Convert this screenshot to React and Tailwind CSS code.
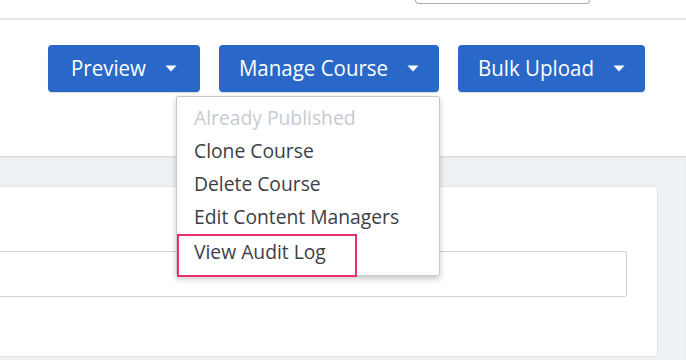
import React from "react";

function Caret() {
  return (
    <svg width="12" height="7" viewBox="0 0 12 7" className="shrink-0">
      <path d="M0.5 0.5 L11.5 0.5 L6 6.5 Z" fill="#ffffff" />
    </svg>
  );
}

function DropButton({ label, width }) {
  return (
    <button
      className="h-[47px] rounded-[4px] bg-[#2968c8] text-white text-[20.5px] flex items-center justify-center gap-[19px] shadow-[0_1px_1px_rgba(0,0,0,0.15)]"
      style={{ width }}
    >
      <span className="inline-block leading-none scale-y-[1.06]">{label}</span>
      <Caret />
    </button>
  );
}

export default function App() {
  return (
    <div
      className="relative w-[686px] h-[360px] overflow-hidden bg-white"
      style={{ fontFamily: '"Open Sans", "Noto Sans", sans-serif' }}
    >
      {/* top strip */}
      <div className="h-[18px] pl-[415px]">
        <div className="w-[175px] h-[4px] border-x border-b border-[#a9aeb6] rounded-b-[4px]" />
      </div>
      <div className="h-[2px] bg-[#e5e5e5]" />

      {/* header with buttons */}
      <div className="h-[136px] pt-[25px] pr-[41px] flex justify-end items-start gap-[19px]">
        <DropButton label="Preview" width={152} />
        <DropButton label="Manage Course" width={220} />
        <DropButton label="Bulk Upload" width={187} />
      </div>

      {/* gray content area */}
      <div className="h-[204px] bg-[#eff2f5] border-t border-[#d9dcdf] shadow-[inset_0_1px_1px_rgba(0,0,0,0.05)] pt-[29px] pr-[28px]">
        <div className="ml-[-4px] h-[171px] bg-white border border-[#e1e4e8] rounded-[2px] pt-[64px] pr-[30px]">
          <div className="h-[46px] border border-[#cdd2da] rounded-[2px] bg-white" />
        </div>
      </div>

      {/* dropdown menu */}
      <div className="absolute left-[176px] top-[96px] w-[264px] h-[180px] bg-white border border-[#c9c9c9] rounded-[2px] shadow-[0_3px_6px_rgba(0,0,0,0.22)] pt-[5px] text-[19.3px] text-[#3b4046]">
        <div className="h-[33px] flex items-center pl-[17px] text-[#c6cbd2]">Already Published</div>
        <div className="h-[33px] flex items-center pl-[17px]">Clone Course</div>
        <div className="h-[33px] flex items-center pl-[17px]">Delete Course</div>
        <div className="h-[33px] flex items-center pl-[17px]">Edit Content Managers</div>
        <div className="w-[180px] h-[43px] border-2 border-[#e8336a] pl-[15px] pt-[1px]">
          <div className="h-[30px] flex items-center">View Audit Log</div>
        </div>
      </div>
    </div>
  );
}
